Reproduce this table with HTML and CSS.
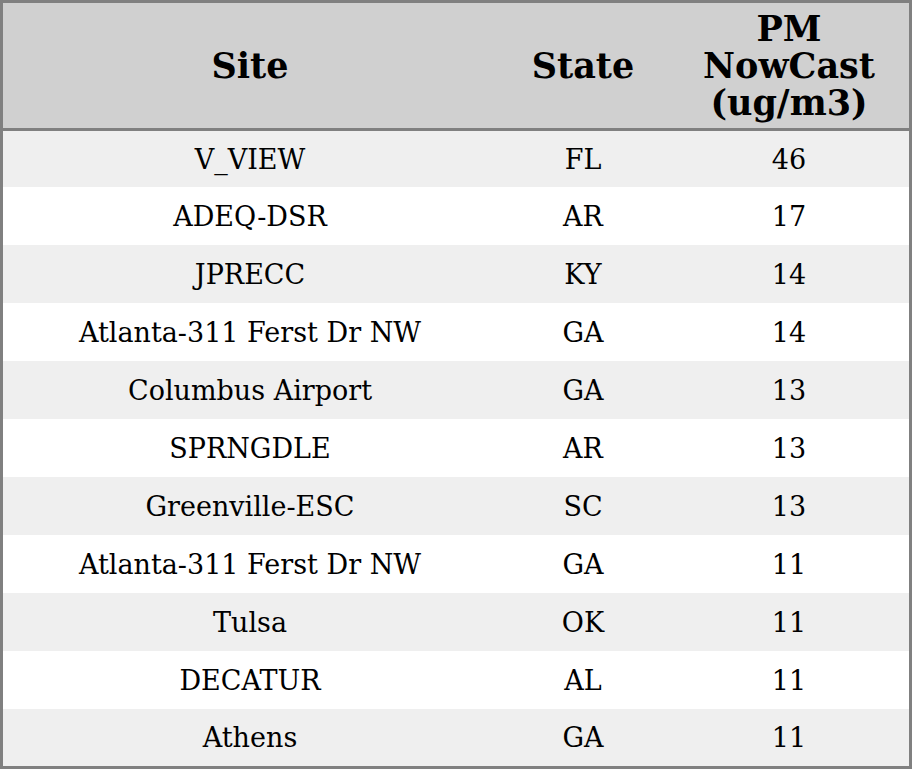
FILE: index.html
```html
<!DOCTYPE html>
<html>
<head>
<meta charset="utf-8">
<link rel="stylesheet" href="styles.css">
</head>
<body>
<table class="data">
  <colgroup>
    <col class="c-site">
    <col class="c-state">
    <col class="c-pm">
  </colgroup>
  <thead>
    <tr>
      <th>Site</th>
      <th>State</th>
      <th>PM<br>NowCast<br>(ug/m3)</th>
    </tr>
  </thead>
  <tbody>
    <tr class="first"><td>V_VIEW</td><td>FL</td><td>46</td></tr>
    <tr><td>ADEQ-DSR</td><td>AR</td><td>17</td></tr>
    <tr><td>JPRECC</td><td>KY</td><td>14</td></tr>
    <tr><td>Atlanta-311 Ferst Dr NW</td><td>GA</td><td>14</td></tr>
    <tr><td>Columbus Airport</td><td>GA</td><td>13</td></tr>
    <tr><td>SPRNGDLE</td><td>AR</td><td>13</td></tr>
    <tr><td>Greenville-ESC</td><td>SC</td><td>13</td></tr>
    <tr><td>Atlanta-311 Ferst Dr NW</td><td>GA</td><td>11</td></tr>
    <tr><td>Tulsa</td><td>OK</td><td>11</td></tr>
    <tr><td>DECATUR</td><td>AL</td><td>11</td></tr>
    <tr class="last"><td>Athens</td><td>GA</td><td>11</td></tr>
  </tbody>
</table>
</body>
</html>
```

FILE: styles.css
```css
html, body {
  margin: 0;
  padding: 0;
  background: #ffffff;
}

.data {
  width: 912px;
  height: 769px;
  box-sizing: border-box;
  border: 3px solid #808080;
  border-collapse: separate;
  border-spacing: 0;
  table-layout: fixed;
  font-family: "DejaVu Serif", serif;
  color: #000000;
}

.c-site { width: 494px; }
.c-state { width: 172px; }
.c-pm { width: 240px; }

.data th {
  background: #d0d0d0;
  font-weight: bold;
  font-size: 35px;
  line-height: 37px;
  height: 125px;
  padding: 0;
  text-align: center;
  vertical-align: middle;
  border-bottom: 3px solid #808080;
}

.data td {
  font-size: 27px;
  height: 58px;
  padding: 0;
  text-align: center;
  vertical-align: middle;
}

.data tbody tr:nth-child(odd) td {
  background: #efefef;
}

.data tbody tr.first td { height: 56px; }
.data tbody tr.last td { height: 57px; }
```
